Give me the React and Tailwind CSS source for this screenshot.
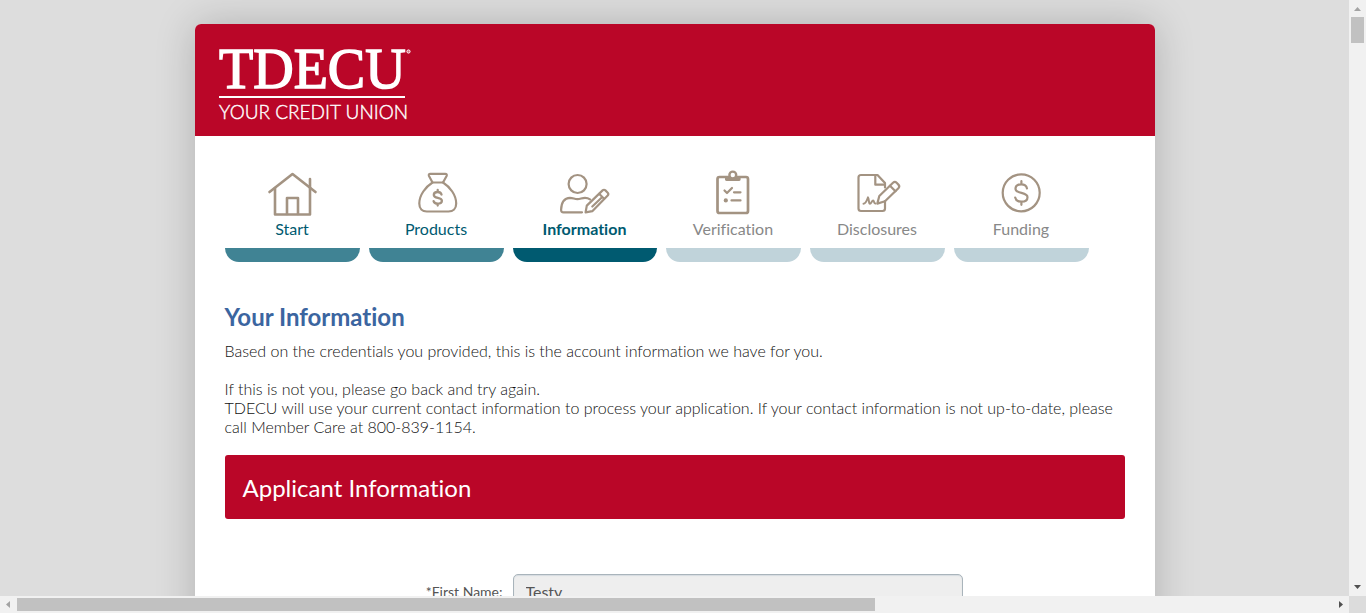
import React from "react";

function HomeIcon() {
  return (
    <svg viewBox="0 0 56 48" className="h-12 w-14" fill="none" stroke="#a39382" strokeWidth="2.6" strokeLinecap="round" strokeLinejoin="round" aria-hidden="true">
      <path d="M5.500 22 28.500 4l23 18" />
      <path d="M11 18v26.500h35V9" />
      <path d="M23 44V28h11v16" />
    </svg>
  );
}

function MoneyBagIcon() {
  return (
    <svg viewBox="0 0 56 48" className="h-12 w-14" fill="none" stroke="#a39382" strokeWidth="2.200" strokeLinecap="round" strokeLinejoin="round" aria-hidden="true">
      <path d="M24.500 12.500 21 6c-.6-1.300.1-2.200 1.300-2.200h15c1.200 0 1.900.9 1.300 2.200L35 12.500Z" />
      <path d="M24.500 12.500C17.500 17 11.300 25 11.300 33.500c0 5 3 8 7.500 8h21.700c4.500 0 7.700-3 7.700-8C48.200 25 42 17 35 12.500" />
      <path strokeWidth="2.300" d="M33.500 24.500c-.5-1.800-1.900-2.500-3.800-2.500-2.200 0-3.900 1-3.900 2.900 0 4 8.100 1.900 8.100 5.900 0 1.900-1.800 2.900-4.200 2.900-2 0-3.600-.8-4.100-2.600M29.700 20v2m0 11.700v1.800" />
    </svg>
  );
}

function PersonPencilIcon() {
  return (
    <svg viewBox="0 0 56 48" className="h-12 w-14" fill="none" stroke="#a39382" strokeWidth="2.200" strokeLinecap="round" strokeLinejoin="round" aria-hidden="true">
      <circle cx="20.600" cy="14" r="9" />
      <path d="M25 42.300H6.500c-1.600 0-2.500-.9-2.400-2.500C4.300 33 7 28 13 27.800c3 0 4.500 1.400 7.400 1.400s4.600-1.400 7.600-1.400c2 0 3.600.5 5 1.500" />
      <path d="m28.600 42.300 1.200-6.700 15.800-15.200c.9-.9 1.900-.9 2.800 0l2.300 2.300c.9.900.9 1.900 0 2.800L35.300 41.200Z" />
      <path d="m42.100 23.800 5 5M45.300 27l-10 9.500" />
    </svg>
  );
}

function ClipboardIcon() {
  return (
    <svg viewBox="0 0 56 48" className="h-12 w-14" fill="none" stroke="#a39382" strokeWidth="2.700" strokeLinecap="round" strokeLinejoin="round" aria-hidden="true">
      <rect x="12.500" y="7" width="30.500" height="36" rx="2" />
      <path d="M20 6h4a3.800 3.800 0 0 1 7.600 0h4v3.500c0 .9-.5 1.400-1.400 1.400H21.500c-.9 0-1.500-.5-1.500-1.400Z" fill="#a39382" stroke="none" />
      <circle cx="27.800" cy="5" r="3.400" strokeWidth="2.400" fill="white" />
      <path strokeWidth="2.200" d="m19.500 20.500 2.500 2.500 5-5M29 22.300h6.500M26.500 30.400h9" />
      <circle cx="20.800" cy="30.400" r="2.100" fill="#a39382" stroke="none" />
    </svg>
  );
}

function SignatureIcon() {
  return (
    <svg viewBox="0 0 56 48" className="h-12 w-14" fill="none" stroke="#a39382" strokeWidth="2.200" strokeLinecap="round" strokeLinejoin="round" aria-hidden="true">
      <path d="M36 17.500V13L28.500 5H12C10.300 5 9.500 5.800 9.500 7.500v31c0 1.700.8 2.500 2.500 2.500h21.500c1.700 0 2.500-.8 2.500-2.500V31" />
      <path d="M26.300 5v9.700h9.500" />
      <path d="m28.300 33.600 2-7.600L44 12.800c1.200-1.100 2.500-1.100 3.600 0l1.800 1.800c1.100 1.100 1.100 2.400 0 3.600L36 31.300Z" />
      <path d="m41 15.700 5.500 5.500" />
      <path strokeWidth="2" d="M14.500 33.700c2.500 0 3.200-3.200 4.500-6.300 1.300 2.300.5 6.300 2 6.300 1.300 0 1.700-3.200 3.200-3.200.9 0 .6 2.900 2 3.100" />
    </svg>
  );
}

function CoinIcon() {
  return (
    <svg viewBox="0 0 56 48" className="h-12 w-14" fill="none" stroke="#a39382" strokeWidth="2.200" strokeLinecap="round" aria-hidden="true">
      <circle cx="28.200" cy="22.800" r="18.500" />
      <path d="M34 18.500c-.6-2.900-2.700-4.100-5.700-4.100-3.400 0-5.800 1.500-5.800 4.300 0 5.700 12 2.700 12 8.500 0 2.900-2.600 4.500-6.100 4.500-3.200 0-5.600-1.300-6.200-4.200M28.400 11.200v3M28.400 31.700v3.100" />
    </svg>
  );
}

const steps = [
  { label: "Start", Icon: HomeIcon, state: "done" },
  { label: "Products", Icon: MoneyBagIcon, state: "done" },
  { label: "Information", Icon: PersonPencilIcon, state: "current" },
  { label: "Verification", Icon: ClipboardIcon, state: "next" },
  { label: "Disclosures", Icon: SignatureIcon, state: "next" },
  { label: "Funding", Icon: CoinIcon, state: "next" },
];

const stepStyles = {
  done: { item: "w-[135px]", text: "text-[#005a70]", bar: "bg-[#408394]" },
  current: { item: "w-36", text: "font-bold text-[#005a70]", bar: "bg-[#005a70]" },
  next: { item: "w-[135px]", text: "text-[#888888]", bar: "bg-[#c0d3da]" },
};

function Logo() {
  return (
    <svg viewBox="0 0 200 80" className="h-20 w-50 overflow-visible" fill="white" role="img" aria-label="TDECU Your Credit Union">
      <text x="0" y="48" fontSize="56" fontFamily="'Liberation Serif', serif" stroke="white" strokeWidth="1.500">TDECU</text>
      <circle cx="189.500" cy="11.500" r="1.600" fill="white" fillOpacity="0.400" stroke="white" strokeWidth="1" />
      <rect x="0" y="56" width="186" height="2" />
      <text x="0" y="79" fontSize="19" fontWeight="300" stroke="white" strokeWidth="0.400" fontFamily="Lato, sans-serif">YOUR CREDIT UNION</text>
    </svg>
  );
}

function Steps() {
  return (
    <nav aria-label="Application progress">
      <ol className="flex gap-[9px]">
        {steps.map(({ label, Icon, state }) => (
          <li key={label} className={stepStyles[state].item}>
            <a href="#" aria-current={state === "current" ? "step" : undefined} className="flex flex-col items-center">
              <Icon />
              <span className={`pb-2 text-base leading-[22px] ${stepStyles[state].text}`}>{label}</span>
              <span className={`h-3.5 w-full rounded-b-[14px] ${stepStyles[state].bar}`} />
            </a>
          </li>
        ))}
      </ol>
    </nav>
  );
}

function VerticalScrollbar() {
  return (
    <div className="flex w-[17px] shrink-0 flex-col items-center bg-[#f1f1f1]" aria-hidden="true">
      <svg className="size-[17px] shrink-0" viewBox="0 0 17 17" fill="#a3a3a3"><path d="M5 11h7L8.500 7Z" /></svg>
      <div className="h-[26px] w-[13px] bg-[#c1c1c1]" />
      <svg className="mt-auto size-[17px] shrink-0" viewBox="0 0 17 17" fill="#505050"><path d="M5 6h7L8.500 10Z" /></svg>
    </div>
  );
}

function HorizontalScrollbar() {
  return (
    <div className="flex h-[17px] shrink-0" aria-hidden="true">
      <div className="flex flex-1 items-center bg-[#f1f1f1]">
        <svg className="size-[17px] shrink-0" viewBox="0 0 17 17" fill="#a3a3a3"><path d="M10 5v7L6 8.500Z" /></svg>
        <div className="flex-1">
          <div className="h-[13px] w-[65.25%] bg-[#c1c1c1]" />
        </div>
        <svg className="size-[17px] shrink-0" viewBox="0 0 17 17" fill="#505050"><path d="M7 5v7l4-3.500Z" /></svg>
      </div>
      <div className="w-[17px] bg-[#dcdcdc]" />
    </div>
  );
}

export default function App() {
  return (
    <div className="flex h-screen flex-col font-['Lato',sans-serif] text-[#555555] [font-variant-ligatures:none]">
      <div className="flex min-h-0 flex-1">
        <div className="min-w-0 flex-1 overflow-hidden bg-[#dddddd] pt-6">
          <div className="mx-auto max-w-[960px] rounded-t-md bg-white shadow-[0_0_40px_rgba(0,0,0,0.2)]">
            <header className="rounded-t-md bg-[#ba0628] px-6 py-4">
              <Logo />
            </header>
            <main className="px-[30px] pt-[34px]">
              <Steps />
              <h1 className="mt-10 text-2xl leading-[30px] font-bold text-[#3b65a0]">Your Information</h1>
              <div className="mt-[9px] text-base leading-[19px] font-light text-[#111111]">
                <p>Based on the credentials you provided, this is the account information we have for you.</p>
                <p className="mt-[19px]">If this is not you, please go back and try again.</p>
                <p>TDECU will use your current contact information to process your application. If your contact information is not up-to-date, please call Member Care at 800-839-1154.</p>
              </div>
              <h2 className="mt-[19px] rounded-[3px] bg-[#ba0628] px-[18px] pt-[17px] pb-[15px] text-2xl leading-8 text-white">Applicant Information</h2>
              <form className="mt-[55px] flex items-start gap-2.5 pb-10">
                <label htmlFor="first-name" className="w-[278px] pt-2 text-right text-sm leading-5">*First Name:</label>
                <input id="first-name" type="text" readOnly defaultValue="Testy" className="h-[34px] w-[450px] rounded-[5px] border border-[#a9b4bb] bg-[#eeeeee] px-3 text-base shadow-[inset_0_1px_1px_#d5dbe0]" />
              </form>
            </main>
          </div>
        </div>
        <VerticalScrollbar />
      </div>
      <HorizontalScrollbar />
    </div>
  );
}
